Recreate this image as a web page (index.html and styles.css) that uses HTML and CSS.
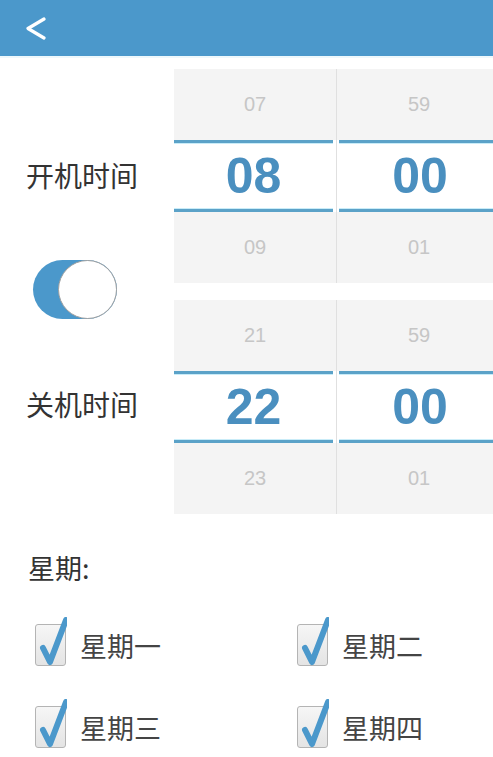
FILE: index.html
```html
<!DOCTYPE html>
<html lang="zh-CN">
<head>
    <meta charset="UTF-8">
    <meta name="viewport" content="width=device-width, initial-scale=1.0">
    <title>定时开关机</title>
    <link rel="stylesheet" href="styles.css">
</head>
<body>
    <!-- 顶部导航 -->
    <div class="top-bar">
        <a class="back-btn" href="#">
            <svg width="22" height="24" viewBox="0 0 22 24">
                <polyline points="19,2 3,11.5 19,21" fill="none" stroke="#fff" stroke-width="3.2" stroke-linecap="round" stroke-linejoin="round"/>
            </svg>
        </a>
    </div>

    <!-- 开关机时间 -->
    <div class="timer-panel">
        <div class="label-col">
            <div class="time-label">开机时间</div>
            <div class="toggle-wrap">
                <div class="toggle on">
                    <div class="toggle-knob"></div>
                </div>
            </div>
            <div class="time-label">关机时间</div>
        </div>

        <div class="picker-col">
            <div class="picker">
                <div class="picker-column hour">
                    <div class="picker-item">07</div>
                    <div class="picker-item selected">08</div>
                    <div class="picker-item">09</div>
                </div>
                <div class="picker-column minute">
                    <div class="picker-item">59</div>
                    <div class="picker-item selected">00</div>
                    <div class="picker-item">01</div>
                </div>
            </div>
            <div class="picker">
                <div class="picker-column hour">
                    <div class="picker-item">21</div>
                    <div class="picker-item selected">22</div>
                    <div class="picker-item">23</div>
                </div>
                <div class="picker-column minute">
                    <div class="picker-item">59</div>
                    <div class="picker-item selected">00</div>
                    <div class="picker-item">01</div>
                </div>
            </div>
        </div>
    </div>

    <!-- 星期选择 -->
    <div class="week-section">
        <div class="week-title">星期:</div>
        <div class="week-grid">
            <label class="week-item"><span class="check-box"><svg width="30" height="50" viewBox="0 0 30 50"><polyline points="6,31 13,45 29,3" fill="none" stroke="#4b98cb" stroke-width="6" stroke-linecap="round" stroke-linejoin="round"/></svg></span>星期一</label>
            <label class="week-item"><span class="check-box"><svg width="30" height="50" viewBox="0 0 30 50"><polyline points="6,31 13,45 29,3" fill="none" stroke="#4b98cb" stroke-width="6" stroke-linecap="round" stroke-linejoin="round"/></svg></span>星期二</label>
            <label class="week-item"><span class="check-box"><svg width="30" height="50" viewBox="0 0 30 50"><polyline points="6,31 13,45 29,3" fill="none" stroke="#4b98cb" stroke-width="6" stroke-linecap="round" stroke-linejoin="round"/></svg></span>星期三</label>
            <label class="week-item"><span class="check-box"><svg width="30" height="50" viewBox="0 0 30 50"><polyline points="6,31 13,45 29,3" fill="none" stroke="#4b98cb" stroke-width="6" stroke-linecap="round" stroke-linejoin="round"/></svg></span>星期四</label>
        </div>
    </div>
</body>
</html>
```

FILE: styles.css
```css
body {
    margin: 0;
    width: 493px;
    height: 757px;
    overflow: hidden;
    background-color: #fff;
    font-family: "Noto Sans CJK SC", "Liberation Sans", sans-serif;
    color: #333;
}

.top-bar {
    height: 56px;
    background-color: #4b98cb;
    border-bottom: 2px solid #eef8fc;
    display: flex;
    align-items: center;
}

.back-btn {
    display: block;
    width: 22px;
    height: 24px;
    margin-left: 25px;
    margin-top: 1px;
}

.back-btn svg {
    display: block;
}

.timer-panel {
    display: flex;
    margin-top: 11px;
}

.label-col {
    width: 174px;
    flex-shrink: 0;
    display: flex;
    flex-direction: column;
}

.time-label {
    height: 212px;
    display: flex;
    align-items: center;
    padding-left: 26px;
    font-size: 28px;
    color: #333;
}

.toggle-wrap {
    height: 17px;
    display: flex;
    align-items: center;
    padding-left: 33px;
}

.toggle {
    width: 84px;
    height: 59px;
    flex-shrink: 0;
    border-radius: 30px;
    background-color: #4b98cb;
    position: relative;
}

.toggle-knob {
    position: absolute;
    right: 0;
    top: 0;
    width: 57px;
    height: 57px;
    border-radius: 50%;
    background-color: #fff;
    border: 1px solid #a0a0a0;
}

.picker-col {
    display: flex;
    flex-direction: column;
    gap: 17px;
    flex-shrink: 0;
}

.picker {
    display: flex;
    width: 330px;
    background-color: #fff;
}

.picker-column {
    flex-shrink: 0;
    display: flex;
    flex-direction: column;
}

.picker-column.hour {
    width: 162px;
    border-right: 1px solid #e0e0e0;
}

.picker-column.minute {
    width: 164px;
}

.picker-item {
    height: 71px;
    background-color: #f4f4f4;
    display: flex;
    align-items: center;
    justify-content: center;
    font-family: "Liberation Sans", Arial, sans-serif;
    font-size: 20px;
    color: #c6c6c6;
}

.picker-item.selected {
    height: 66px;
    background-color: #fff;
    border-top: 3px solid #5ba2c8;
    border-bottom: 3px solid #5ba2c8;
    font-size: 50px;
    font-weight: bold;
    color: #4a8fbf;
    box-shadow: inset 0 1px 0 #c9ecf8, inset 0 -1px 0 #c9ecf8;
}

.hour .picker-item.selected {
    margin-right: 3px;
}

.minute .picker-item.selected {
    margin-left: 2px;
}

.week-section {
    padding-left: 28px;
    margin-top: 36px;
}

.week-title {
    font-size: 27px;
    color: #333;
    height: 36px;
    line-height: 36px;
}

.week-grid {
    display: grid;
    grid-template-columns: 262px 1fr;
    row-gap: 30px;
    margin-top: 33px;
}

.week-item {
    display: flex;
    align-items: center;
    height: 52px;
    font-size: 27px;
    color: #444;
}

.check-box {
    position: relative;
    width: 29px;
    height: 40px;
    margin-left: 7px;
    margin-right: 14px;
    border: 1px solid #b4b4b4;
    border-radius: 3px;
    background: linear-gradient(#f6f6f6, #e4e4e4);
}

.check-box svg {
    position: absolute;
    left: 1px;
    top: -8px;
}
```
